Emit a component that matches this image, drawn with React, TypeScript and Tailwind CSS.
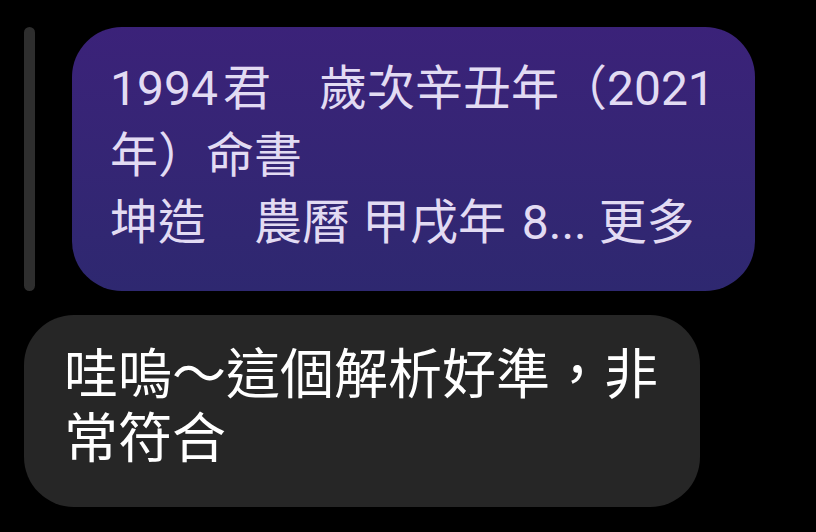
export default function App() {
  const font = { fontFamily: '"Roboto", "Noto Sans CJK TC", sans-serif' };
  return (
    <div className="w-[816px] h-[532px] bg-black overflow-hidden" style={font}>
      <div className="flex pt-[27px] pl-[24px]">
        <div className="w-[11px] h-[264px] rounded-full bg-[#2e2e2e]" />
        <div className="ml-[37px] w-[683px] h-[264px] rounded-[50px] bg-gradient-to-b from-[#3b2279] to-[#2e2870] pl-[38px] pr-[20px] pt-[28px] text-[48px] leading-[67px] text-[#e2dbf3]">
          <div>
            1994<span className="ml-[5px]">君</span>　歲次辛丑年（2021
          </div>
          <div>年）命書</div>
          <div>
            坤造　農曆 甲戌年 <span className="ml-[4px]">8...</span> 更多
          </div>
        </div>
      </div>
      <div className="pl-[24px] pt-[24px]">
        <div className="w-[676px] h-[192px] rounded-[50px] bg-[#262626] pl-[40px] pt-[29px] text-[54px] leading-[64px] text-white">
          <div>哇嗚～這個解析好準，非</div>
          <div>常符合</div>
        </div>
      </div>
    </div>
  );
}
